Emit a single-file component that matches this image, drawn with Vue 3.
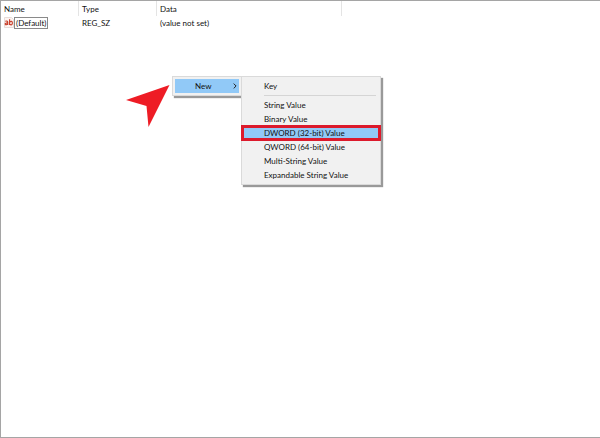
<template>
  <main class="registry">
    <table class="values">
      <colgroup>
        <col class="col-name" />
        <col class="col-type" />
        <col class="col-data" />
        <col />
      </colgroup>
      <thead>
        <tr>
          <th>Name</th>
          <th>Type</th>
          <th>Data</th>
          <td></td>
        </tr>
      </thead>
      <tbody>
        <tr v-for="row in rows" :key="row.name">
          <td>
            <div class="name">
              <svg class="value-icon" viewBox="0 0 10 11" aria-hidden="true">
                <path d="M.5 .5h7l2 2v8h-9z" fill="#fdf4f1" stroke="#e6dcd9" />
                <path
                  d="M1.4 4.4q1.9-1 2.3.5v3M3.6 6Q1.2 5.800 1.200 7.100q.4 1.400 2.400 0M5.600 2.300v5.600M5.600 5q2.600-1.700 2.800 1-.2 2.800-2.800 1.300"
                  fill="none"
                  stroke="#c8402c"
                  stroke-width="1.200"
                />
              </svg>
              <span class="label">{{ row.name }}</span>
            </div>
          </td>
          <td>{{ row.type }}</td>
          <td>{{ row.data }}</td>
          <td></td>
        </tr>
      </tbody>
    </table>

    <!-- Context menu -->
    <div class="menu context" role="menu">
      <button class="item active" type="button" role="menuitem" aria-haspopup="true">
        New
        <svg class="chevron" viewBox="0 0 4 6" aria-hidden="true">
          <path d="M.7 .6 3.100 3 .7 5.400" fill="none" stroke="#222" />
        </svg>
      </button>
    </div>

    <!-- Submenu -->
    <div class="menu submenu" role="menu">
      <button class="item" type="button" role="menuitem">Key</button>
      <hr />
      <button
        v-for="item in items"
        :key="item"
        class="item"
        :class="{ active: item === selected, marked: item === selected }"
        type="button"
        role="menuitem"
        @click="selected = item"
      >
        {{ item }}
      </button>
    </div>

    <!-- Pointer -->
    <svg class="pointer" viewBox="0 0 44 43" aria-hidden="true">
      <path d="M43.500 0 0 15l20.500 6L22.500 42z" fill="#ee1c25" />
    </svg>
  </main>
</template>

<script setup>
import { ref } from "vue";

const rows = [{ name: "(Default)", type: "REG_SZ", data: "(value not set)" }];

const items = [
  "String Value",
  "Binary Value",
  "DWORD (32-bit) Value",
  "QWORD (64-bit) Value",
  "Multi-String Value",
  "Expandable String Value",
];

const selected = ref("DWORD (32-bit) Value");
</script>

<style>
body {
  margin: 0;
}
</style>

<style scoped>
.registry {
  position: relative;
  box-sizing: border-box;
  min-height: 100vh;
  border: 1px solid #a5a5a5;
  border-right: 0;
  background: #fff;
  color: #111;
  font-family: "Segoe UI", Lato, sans-serif;
  font-size: 8px;
  line-height: 10px;
}

/* Value list */
.values {
  width: 100%;
  table-layout: fixed;
  border-collapse: separate;
  border-spacing: 0;
}

.col-name {
  width: 78px;
}

.col-type {
  width: 78px;
}

.col-data {
  width: 185px;
}

th,
td {
  padding: 0 3px;
  text-align: left;
  font-weight: 400;
  white-space: nowrap;
}

th {
  height: 15px;
  border-right: 1px solid #e4e4e4;
}

tbody td {
  height: 13px;
}

.name {
  display: flex;
  align-items: center;
}

.value-icon {
  width: 10px;
  height: 11px;
}

.label {
  padding: 0 1px;
  border: 1px solid #8a8a8a;
}

/* Menus */
.menu {
  position: absolute;
  box-sizing: border-box;
  padding: 2px;
  border: 1px solid #dadada;
  background: #f1f1f1;
  box-shadow: 2px 2px 1px rgba(0, 0, 0, 0.4);
}

.context {
  top: 75px;
  left: 171px;
  width: 70px;
}

.submenu {
  top: 75px;
  left: 240px;
  width: 140px;
}

.item {
  display: flex;
  align-items: center;
  width: 100%;
  height: 14px;
  padding: 0 20px;
  border: 0;
  background: none;
  color: inherit;
  font: inherit;
  text-align: left;
  white-space: nowrap;
}

.active {
  background: #91c9f7;
}

.context .item {
  justify-content: space-between;
  padding-right: 2px;
}

.chevron {
  width: 4px;
  height: 6px;
}

hr {
  height: 1px;
  margin: 2px 2px 2px 20px;
  border: 0;
  background: #d5d5d5;
}

.marked {
  position: relative;
}

.marked::after {
  content: "";
  position: absolute;
  inset: -1px -3px;
  border: 3px solid #dc1a2c;
}

.pointer {
  position: absolute;
  top: 84px;
  left: 125px;
  width: 44px;
  height: 43px;
}
</style>
